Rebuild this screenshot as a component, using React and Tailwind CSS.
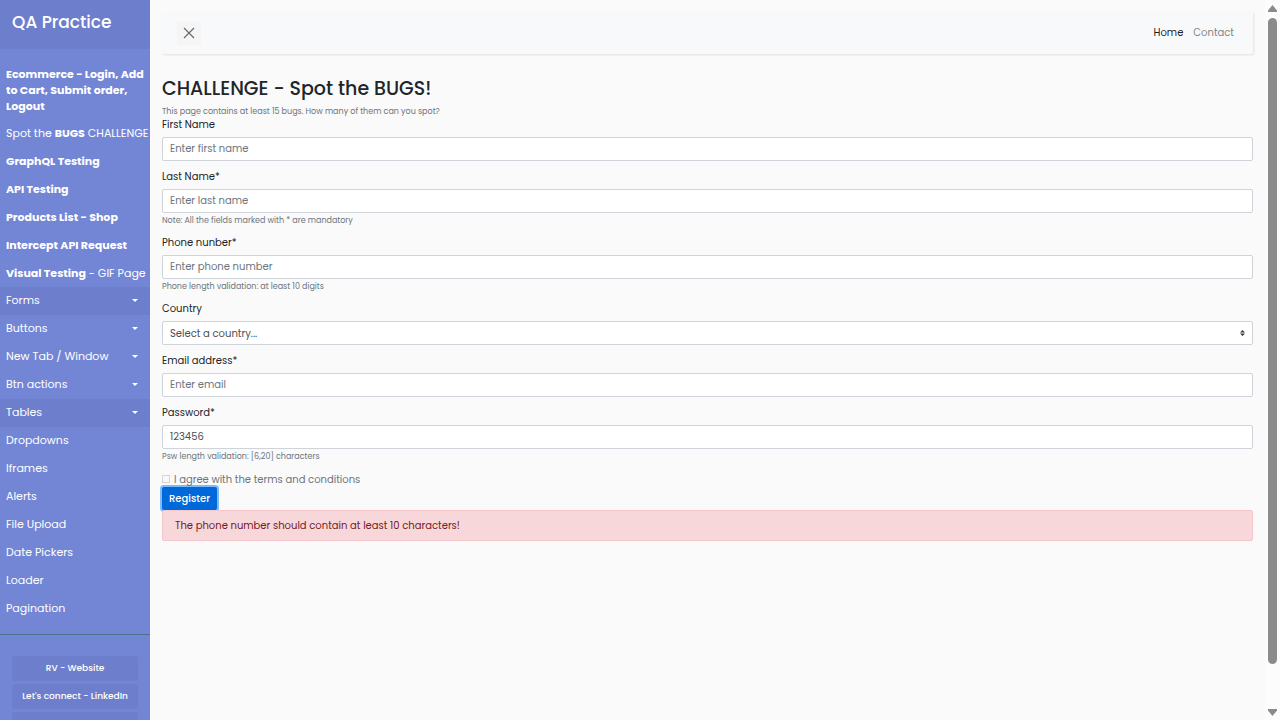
import React from "react";

const topLinks = [
  [["Spot the "], ["BUGS", true], [" CHALLENGE"]],
  [["GraphQL Testing", true]],
  [["API Testing", true]],
  [["Products List - Shop", true]],
  [["Intercept API Request", true]],
  [["Visual Testing", true], [" - GIF Page"]],
];

const menus = [
  { label: "Forms", active: true },
  { label: "Buttons" },
  { label: "New Tab / Window" },
  { label: "Btn actions" },
  { label: "Tables", active: true },
];

const pages = ["Dropdowns", "Iframes", "Alerts", "File Upload", "Date Pickers", "Loader", "Pagination"];

const external = ["RV - Website", "Let's connect - LinkedIn", ""];

function Sidebar() {
  return (
    <nav className="h-full w-[150px] shrink-0 overflow-hidden bg-[#7386d5] text-[11px] text-white">
      <div className="flex h-[49px] items-center bg-[#6d7fcc] px-3 pb-1">
        <h3 className="text-[17px] font-medium whitespace-nowrap">QA Practice</h3>
      </div>
      <ul className="border-b border-[#47748b] pt-3 pb-[11px]">
        <li>
          <a href="#ecommerce" className="block px-1.5 py-[5px] leading-4 font-bold">
            Ecommerce - Login, Add to Cart, Submit order, Logout
          </a>
        </li>
        {topLinks.map((parts, i) => (
          <li key={i}>
            <a href="#page" className="flex h-7 items-center px-1.5 whitespace-pre">
              {parts.map(([text, bold]) => (
                <span key={text} className={bold ? "font-bold" : "font-normal"}>{text}</span>
              ))}
            </a>
          </li>
        ))}
        {menus.map(({ label, active }) => (
          <li key={label}>
            <button
              type="button"
              className={`flex h-7 w-full items-center justify-between pr-3 pb-px pl-1.5 ${active ? "bg-[#6d7fcc]" : ""}`}
            >
              {label}
              <svg width="6" height="3" viewBox="0 0 6 3" aria-hidden="true">
                <path d="M0 0h6L3 3z" fill="currentColor" />
              </svg>
            </button>
          </li>
        ))}
        {pages.map((label) => (
          <li key={label}>
            <a href="#page" className="flex h-7 items-center px-1.5 pb-0.5">{label}</a>
          </li>
        ))}
      </ul>
      <ul className="flex flex-col gap-[3px] px-3 pt-[21px] text-[9px] font-medium">
        {external.map((label) => (
          <li key={label}>
            <a href="#external" className="flex h-[25px] items-center justify-center rounded-[3px] bg-[#6d7fcc] whitespace-nowrap">
              {label}
            </a>
          </li>
        ))}
      </ul>
    </nav>
  );
}

const control =
  "block h-6 w-full rounded-[2px] border border-[#ced4da] bg-white px-[7px] text-[10px] text-[#495057] placeholder:text-[#6c757d] outline-none";

function Field({ id, label, note, children }) {
  return (
    <div className="mb-2">
      <label htmlFor={id} className="mb-[5px] block h-[15px] text-[10px] leading-[15px]">{label}</label>
      {children}
      {note && <small className="mt-0.5 block text-[8px] leading-3 text-[#6c757d]">{note}</small>}
    </div>
  );
}

function Scrollbar() {
  return (
    <div className="flex h-full w-[15px] shrink-0 flex-col items-center bg-[#fcfcfc] pt-[5px] pb-1" aria-hidden="true">
      <svg width="9" height="7" viewBox="0 0 9 7">
        <path d="M4.5 0 9 5.5V7H0V5.5z" fill="#8b8b8b" />
      </svg>
      <div className="mt-1.5 mb-[45px] w-[9px] flex-1 rounded-full bg-[#8b8b8b]" />
      <svg width="9" height="7" viewBox="0 0 9 7">
        <path d="M4.5 7 9 1.5V0H0v1.5z" fill="#8b8b8b" />
      </svg>
    </div>
  );
}

export default function App() {
  return (
    <div className="flex h-screen overflow-hidden bg-[#fafafa] font-['Poppins','Inter',sans-serif] text-[#212529]">
      <Sidebar />
      <main className="min-w-0 flex-1 px-3 pt-3">
        <nav className="flex h-[42px] items-center justify-between bg-[#f8f9fb] pr-[19px] pl-[15px] shadow-[1px_1px_2px_rgba(0,0,0,0.1)]">
          <button type="button" aria-label="Toggle sidebar" className="flex size-6 items-center justify-center bg-[#f5f5f5]">
            <svg width="12" height="12" viewBox="0 0 12 12" aria-hidden="true">
              <path d="M1 1l10 10M11 1L1 11" stroke="#666" strokeWidth="1.1" fill="none" />
            </svg>
          </button>
          <div className="flex gap-2.5 pb-0.5 text-[10px]">
            <a href="#home" className="text-black/90">Home</a>
            <a href="#contact" className="text-[#848586]">Contact</a>
          </div>
        </nav>

        <h2 className="mt-[23px] text-[19px] leading-6 font-medium">CHALLENGE - Spot the BUGS!</h2>
        <small className="mt-[5px] block text-[8px] leading-[11px] text-[#6c757d]">
          This page contains at least 15 bugs. How many of them can you spot?
        </small>

        <form onSubmit={(e) => e.preventDefault()}>
          <Field id="firstName" label="First Name">
            <input id="firstName" type="text" placeholder="Enter first name" className={control} />
          </Field>
          <Field id="lastName" label="Last Name*" note="Note: All the fields marked with * are mandatory">
            <input id="lastName" type="text" placeholder="Enter last name" className={control} />
          </Field>
          <Field id="phone" label="Phone nunber*" note="Phone length validation: at least 10 digits">
            <input id="phone" type="text" placeholder="Enter phone number" className={control} />
          </Field>
          <Field id="country" label="Country">
            <div className="relative">
              <select id="country" className={`${control} appearance-none`}>
                <option>Select a country...</option>
              </select>
              <svg className="pointer-events-none absolute top-[9px] right-2" width="5" height="6" viewBox="0 0 5 6" aria-hidden="true">
                <path d="M0 2.5h5L2.5 0zM0 3.5h5L2.5 6z" fill="#343a40" />
              </svg>
            </div>
          </Field>
          <Field id="email" label="Email address*">
            <input id="email" type="email" placeholder="Enter email" className={control} />
          </Field>
          <Field id="password" label="Password*" note="Psw length validation: [6,20] characters">
            <input id="password" type="text" defaultValue="123456" className={control} />
          </Field>
          <div className="flex h-4 items-center gap-1 text-[10px] text-[#6c757d]">
            <input id="terms" type="checkbox" disabled className="size-2 appearance-none border border-[#d5d5d5] bg-[#f8f8f8]" />
            <label htmlFor="terms">I agree with the terms and conditions</label>
          </div>
          <button
            type="submit"
            className="block h-[23px] rounded-[2px] bg-[#0069d9] px-[7px] text-[10px] font-medium text-white shadow-[0_0_0_2px_#7fb9fd]"
          >
            Register
          </button>
        </form>
        <div role="alert" className="flex h-[31px] items-center rounded-[2px] border border-[#f5c6cb] bg-[#f8d7da] px-3 text-[10px] text-[#721c24]">
          The phone number should contain at least 10 characters!
        </div>
      </main>
      <Scrollbar />
    </div>
  );
}
